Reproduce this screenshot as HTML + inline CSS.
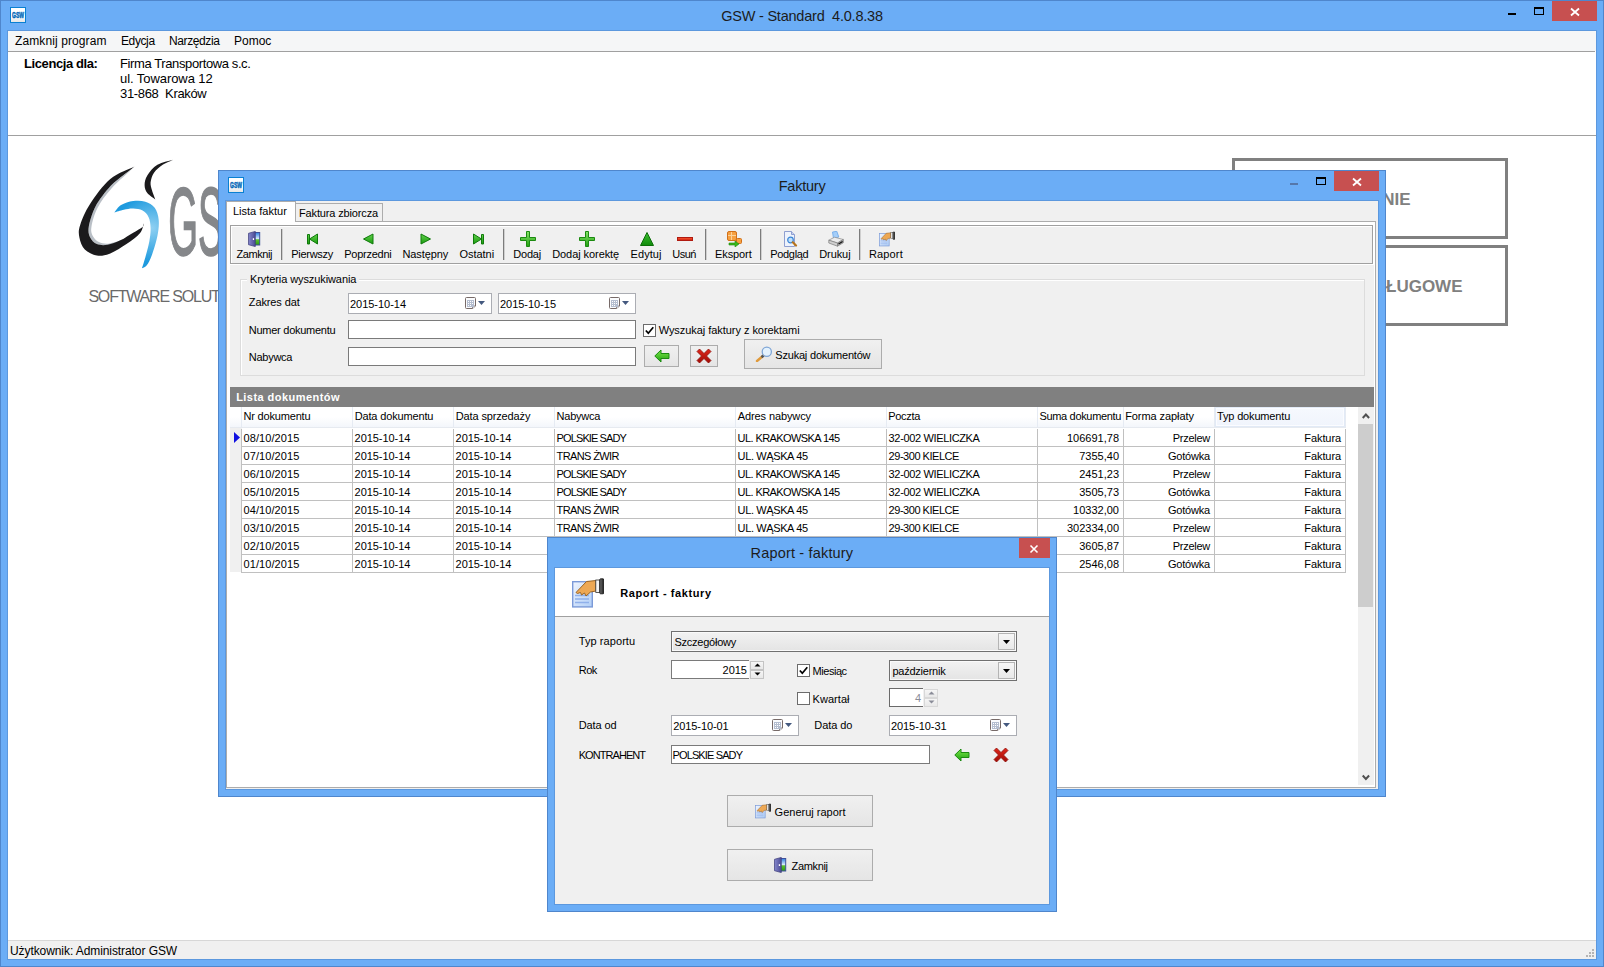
<!DOCTYPE html><html lang="pl"><head><meta charset="utf-8"><title>GSW - Standard 4.0.8.38</title><style>
*{box-sizing:border-box;margin:0;padding:0}
html,body{width:1604px;height:967px;overflow:hidden}
body{position:relative;background:#6BADF6;font-family:"Liberation Sans",sans-serif;font-size:11px;color:#000}
.a{position:absolute}
.t{position:absolute;white-space:pre;line-height:14px;height:14px}
.win{position:absolute;background:#6BADF6;box-shadow:inset 0 0 0 1px #4F86CC}
.title{position:absolute;font-size:15px;line-height:20px;height:20px;white-space:pre;color:#000}
.close{position:absolute;background:#C75050}
.inp{position:absolute;background:#fff;border:1px solid #7a7a7a}
.dt{position:absolute;background:#fff;border:1px solid #abadb3}
.btn{position:absolute;border:1px solid #acacac;background:linear-gradient(#f0f0f0,#e5e5e5)}
.tbi{position:absolute;top:5px;width:16px;height:16px}
.sep{position:absolute;top:3px;width:1px;height:31px;background:#7c7c7c;box-shadow:1px 0 0 #cfcfcf}
.cell{position:absolute;height:18px;border-right:1px solid #c0c0c0;border-bottom:1px solid #c0c0c0;background:#fff}
.hd{position:absolute;top:0;height:20px;background:linear-gradient(#fff,#fff 50%,#f3f6fb);border-right:1px solid #e6ebf3}
.cb{position:absolute;width:13px;height:13px;background:#fff;border:1px solid #6c6c6c}
</style></head><body>
<div class="win" style="left:0;top:0;width:1604px;height:967px">
<svg class="a" style="left:10px;top:7px" width="16" height="16" viewBox="0 0 16 16"><defs><linearGradient id="gi1" x1="0" y1="0" x2="0" y2="1"><stop offset="0.5" stop-color="#fff"/><stop offset="1" stop-color="#e4e4e4"/></linearGradient></defs><rect x="0.5" y="0.5" width="15" height="15" fill="url(#gi1)" stroke="#0a80d2"/><text x="2" y="11.300" font-family="Liberation Sans, sans-serif" font-size="8.600" font-weight="bold" fill="#0468b8" stroke="#0468b8" stroke-width="0.500" textLength="12" lengthAdjust="spacingAndGlyphs">GSW</text></svg>
<span class="t" style="left:721.2px;top:6px;font-size:14.5px;line-height:20px;height:20px;color:#1c1c1c;letter-spacing:-0.22px">GSW - Standard  4.0.8.38</span>
<div class="a" style="left:1508px;top:13px;width:8px;height:2px;background:#000"></div>
<div class="a" style="left:1534px;top:7px;width:10px;height:8px;border:1px solid #000;border-top-width:2px"></div>
<div class="close" style="left:1552px;top:1px;width:45px;height:20px"></div><svg class="a" style="left:1569px;top:5.5px" width="12" height="12" viewBox="-6 -6 12 12"><path d="M-4 -3.5L4 3.5M4 -3.5L-4 3.5" stroke="#fff" stroke-width="1.8" fill="none"/></svg>
<div class="a" style="left:8px;top:31px;width:1588px;height:928px;background:#fff;box-shadow:0 0 0 1px #5C98DE">
<div class="a" style="left:0;top:0;width:1588px;height:20px;background:#F5F6F7;font-size:12px">
<span class="t" style="left:7px;top:3px;letter-spacing:0.10px">Zamknij program</span>
<span class="t" style="left:113px;top:3px;letter-spacing:-0.39px">Edycja</span>
<span class="t" style="left:161px;top:3px;letter-spacing:-0.40px">Narzędzia</span>
<span class="t" style="left:226px;top:3px">Pomoc</span>
</div>
<div class="a" style="left:0;top:20px;width:1587px;height:1px;background:#a0a0a0"></div>
<span class="t" style="left:16px;top:25px;font-size:13px;font-weight:bold;line-height:15px;letter-spacing:-0.40px">Licencja dla:</span>
<span class="t" style="left:112px;top:25px;font-size:13px;line-height:15px;letter-spacing:-0.39px">Firma Transportowa s.c.</span>
<span class="t" style="left:112px;top:40px;font-size:13px;line-height:15px;letter-spacing:-0.07px">ul. Towarowa 12</span>
<span class="t" style="left:112px;top:55px;font-size:13px;line-height:15px;letter-spacing:-0.33px">31-868  Kraków</span>
<div class="a" style="left:0;top:104px;width:1588px;height:1px;background:#a0a0a0"></div>
<svg class="a" style="left:62px;top:119px" width="160" height="130" viewBox="70 150 160 130">
<defs><radialGradient id="lb2" cx="152" cy="228" r="34" gradientUnits="userSpaceOnUse"><stop offset="0" stop-color="#8fd0f2"/><stop offset="1" stop-color="#1e9ade"/></radialGradient></defs>
<path d="M133.2 168.1C129.4 171.2 116.6 179.9 110.3 186.3C104.1 192.7 99.1 199.7 95.5 206.5C92.0 213.2 89.7 221.5 88.8 226.6C87.9 231.8 88.8 234.5 90.2 237.4C91.5 240.3 94.0 242.7 96.9 244.1C99.8 245.5 103.6 246.1 107.6 245.7C111.7 245.3 116.6 243.6 121.1 241.7C125.6 239.7 132.3 235.3 134.5 234.0C132.3 235.0 125.4 238.4 121.1 240.1C116.7 241.7 112.0 243.3 108.3 243.7C104.6 244.0 101.5 243.3 98.9 242.1C96.3 240.8 94.1 238.6 92.8 236.0C91.6 233.4 90.7 231.3 91.5 226.6C92.3 221.9 94.2 214.2 97.6 207.8C100.9 201.4 105.7 194.9 111.7 188.3C117.6 181.7 129.6 171.5 133.2 168.1Z" fill="#b9bfc6"/>
<path d="M134.5 166.4C130.5 168.5 117.7 172.7 110.3 178.9C102.9 185.1 95.2 196.0 90.2 203.8C85.1 211.5 81.9 219.7 80.1 225.3C78.3 230.9 78.6 233.3 79.4 237.4C80.2 241.4 81.9 246.4 84.8 249.5C87.7 252.5 92.6 254.8 96.9 255.5C101.1 256.2 105.4 255.4 110.3 253.5C115.3 251.6 121.5 247.4 126.5 244.1C131.4 240.7 137.0 236.8 139.9 233.3C142.8 229.9 143.3 224.9 143.9 223.3C143.7 223.9 144.4 225.3 142.6 226.9C140.8 228.4 136.9 230.4 133.2 232.7C129.5 234.9 124.7 238.3 120.4 240.3C116.1 242.3 111.6 244.1 107.6 244.8C103.7 245.4 99.8 245.3 96.9 244.1C94.0 242.9 91.5 240.3 90.2 237.4C88.8 234.5 87.9 231.8 88.8 226.6C89.7 221.5 92.0 213.2 95.5 206.5C99.1 199.7 105.2 191.9 110.3 186.3C115.5 180.7 122.4 176.2 126.5 172.8C130.5 169.5 133.2 167.5 134.5 166.4Z" fill="#1b1a1c"/>
<path d="M173.5 159.7C170.8 160.5 161.7 162.1 157.4 164.8C153.0 167.4 149.4 172.2 147.3 175.5C145.2 178.9 144.6 182.0 144.6 184.9C144.6 187.9 145.5 190.6 147.3 193.0C149.1 195.4 154.0 198.4 155.3 199.5C154.8 197.9 152.8 193.2 152.0 190.3C151.2 187.5 150.3 185.2 150.6 182.3C151.0 179.3 152.0 175.8 154.0 172.8C156.0 169.9 159.5 167.0 162.7 164.8C166.0 162.6 171.7 160.5 173.5 159.7Z" fill="#1b1a1c"/>
<path d="M114.4 212.5C115.5 211.3 117.9 207.0 121.1 205.1C124.2 203.2 129.1 201.6 133.2 201.1C137.2 200.5 141.7 200.6 145.3 201.7C148.9 202.9 152.4 204.8 154.7 207.8C156.9 210.8 158.3 215.2 158.7 219.9C159.2 224.6 158.5 230.2 157.4 236.0C156.2 241.8 153.8 249.9 152.0 254.8C150.2 259.8 148.3 263.4 146.6 265.6C144.9 267.8 142.7 267.8 141.9 268.3C142.5 266.5 144.0 262.0 145.3 257.5C146.5 253.0 148.4 246.3 149.3 241.4C150.2 236.5 150.8 232.0 150.6 228.0C150.5 223.9 150.0 220.1 148.6 217.2C147.3 214.3 145.2 211.9 142.6 210.5C140.0 209.0 136.3 208.6 133.2 208.5C130.0 208.4 126.9 209.1 123.8 209.8C120.6 210.5 115.9 212.1 114.4 212.5Z" fill="url(#lb2)"/>
<text x="0" y="0" font-family="Liberation Sans, sans-serif" font-size="97" fill="#85878a" stroke="#85878a" stroke-width="1.2" style="vector-effect:non-scaling-stroke" transform="translate(168.3 255) scale(0.395 1)">GSW</text>
</svg>
<span class="t" style="left:80.4px;top:257px;font-size:16px;line-height:18px;height:18px;color:#6a6a6a;letter-spacing:-1.19px">SOFTWARE SOLUTIONS</span>
<div class="a" style="left:1224px;top:127px;width:276px;height:81px;border:3px solid #808080;background:#fff"><span class="t" style="right:94.4px;top:29px;font-size:17px;font-weight:bold;color:#808080;line-height:20px;height:20px">FAKTUROWANIE</span></div>
<div class="a" style="left:1224px;top:214px;width:276px;height:81px;border:3px solid #808080;background:#fff"><span class="t" style="right:42.5px;top:29px;font-size:17px;font-weight:bold;color:#808080;line-height:20px;height:20px">FAKTURY USŁUGOWE</span></div>
<div class="a" style="left:0;top:909px;width:1588px;height:19px;background:#F0F0F0;border-top:1px solid #d7d7d7;font-size:12px"><span class="t" style="left:2px;top:3px;letter-spacing:-0.08px">Użytkownik: Administrator GSW</span>
<svg class="a" style="right:2px;bottom:1px" width="9" height="9" viewBox="0 0 9 9"><g fill="#b4b4b4"><rect x="7" y="0" width="2" height="2"/><rect x="4" y="3" width="2" height="2"/><rect x="7" y="3" width="2" height="2"/><rect x="1" y="6" width="2" height="2"/><rect x="4" y="6" width="2" height="2"/><rect x="7" y="6" width="2" height="2"/></g></svg>
</div>
</div>
</div>
<div class="win" style="left:218px;top:170px;width:1168px;height:627px">
<svg class="a" style="left:10px;top:7px" width="16" height="16" viewBox="0 0 16 16"><defs><linearGradient id="gi3" x1="0" y1="0" x2="0" y2="1"><stop offset="0.5" stop-color="#fff"/><stop offset="1" stop-color="#e4e4e4"/></linearGradient></defs><rect x="0.5" y="0.5" width="15" height="15" fill="url(#gi3)" stroke="#0a80d2"/><text x="2" y="11.300" font-family="Liberation Sans, sans-serif" font-size="8.600" font-weight="bold" fill="#0468b8" stroke="#0468b8" stroke-width="0.500" textLength="12" lengthAdjust="spacingAndGlyphs">GSW</text></svg>
<span class="t" style="left:560.7px;top:6px;font-size:14.5px;line-height:20px;height:20px;color:#1c1c1c;letter-spacing:-0.22px">Faktury</span>
<div class="a" style="left:1072px;top:13px;width:8px;height:2px;background:#5577aa"></div>
<div class="a" style="left:1098px;top:7px;width:10px;height:8px;border:1px solid #000;border-top-width:2px"></div>
<div class="close" style="left:1116px;top:1px;width:45px;height:20px"></div><svg class="a" style="left:1133px;top:5.5px" width="12" height="12" viewBox="-6 -6 12 12"><path d="M-4 -3.5L4 3.5M4 -3.5L-4 3.5" stroke="#fff" stroke-width="1.8" fill="none"/></svg>
<div class="a" style="left:8px;top:31px;width:1152px;height:588px;background:#F0F0F0;box-shadow:0 0 0 1px #5C98DE">
<div class="a" style="left:0;top:20px;width:1150px;height:567px;background:#fff;border:1px solid #acacac"></div>
<div class="a" style="left:0;top:0;width:70px;height:21px;background:#fff;border:1px solid #acacac;border-bottom:none"><span class="t" style="left:6px;top:2px">Lista faktur</span></div>
<div class="a" style="left:69px;top:2px;width:88px;height:19px;background:#f0f0f0;border:1px solid #acacac"><span class="t" style="left:3px;top:2px;letter-spacing:-0.14px">Faktura zbiorcza</span></div>
<div class="a" style="left:4px;top:24px;width:1143px;height:39px;background:#F0F0F0;border:1px solid #a0a0a0;box-shadow:inset 1px 1px 0 #fff">
<div class="a" style="left:0;top:0;right:0;bottom:0">
<span class="tbi" style="left:16px"><svg width="16" height="16" viewBox="0 0 16 16"><defs><linearGradient id="sky4" x1="0" y1="0" x2="0" y2="1"><stop offset="0" stop-color="#2a7ce0"/><stop offset=".5" stop-color="#d8ecfc"/><stop offset=".58" stop-color="#5cc030"/><stop offset="1" stop-color="#2a9a14"/></linearGradient><linearGradient id="dr4" x1="0" y1="0" x2="1" y2="0"><stop offset="0" stop-color="#8587cc"/><stop offset="1" stop-color="#4b4b94"/></linearGradient></defs><rect x="7.500" y="1.500" width="5.200" height="12.500" fill="url(#sky4)" stroke="#3f4f9a" stroke-width="1"/><path d="M1.500 2.300L8.300 0.400V15.600L1.500 13.700Z" fill="url(#dr4)" stroke="#3a3a78" stroke-width=".7"/><rect x="5.800" y="7.200" width="1.300" height="1.800" fill="#fff"/></svg></span>
<span class="t" style="left:5.5px;top:21px;letter-spacing:-0.43px">Zamknij</span>
<span class="tbi" style="left:74px"><svg width="16" height="16" viewBox="0 0 16 16"><defs><linearGradient id="gg5" x1="0" y1="0" x2="0" y2="1"><stop offset="0" stop-color="#62d24c"/><stop offset="1" stop-color="#1a9a0e"/></linearGradient></defs><path d="M12.500 3V13L4.500 8Z" fill="url(#gg5)" stroke="#0f7a0a" stroke-width="1" stroke-linejoin="round"/><rect x="2.500" y="3.500" width="2" height="9.500" fill="url(#gg5)" stroke="#0f7a0a" stroke-width="1" stroke-linejoin="round"/></svg></span>
<span class="t" style="left:60.3px;top:21px;letter-spacing:-0.29px">Pierwszy</span>
<span class="tbi" style="left:129px"><svg width="16" height="16" viewBox="0 0 16 16"><defs><linearGradient id="gg6" x1="0" y1="0" x2="0" y2="1"><stop offset="0" stop-color="#62d24c"/><stop offset="1" stop-color="#1a9a0e"/></linearGradient></defs><path d="M13 3V13L3.500 8Z" fill="url(#gg6)" stroke="#0f7a0a" stroke-width="1" stroke-linejoin="round"/></svg></span>
<span class="t" style="left:113.2px;top:21px;letter-spacing:-0.25px">Poprzedni</span>
<span class="tbi" style="left:186px"><svg width="16" height="16" viewBox="0 0 16 16"><defs><linearGradient id="gg7" x1="0" y1="0" x2="0" y2="1"><stop offset="0" stop-color="#62d24c"/><stop offset="1" stop-color="#1a9a0e"/></linearGradient></defs><path d="M4 3V13L13.500 8Z" fill="url(#gg7)" stroke="#0f7a0a" stroke-width="1" stroke-linejoin="round"/></svg></span>
<span class="t" style="left:171.5px;top:21px;letter-spacing:-0.11px">Następny</span>
<span class="tbi" style="left:238px"><svg width="16" height="16" viewBox="0 0 16 16"><defs><linearGradient id="gg8" x1="0" y1="0" x2="0" y2="1"><stop offset="0" stop-color="#62d24c"/><stop offset="1" stop-color="#1a9a0e"/></linearGradient></defs><path d="M4.500 3V13L12.500 8Z" fill="url(#gg8)" stroke="#0f7a0a" stroke-width="1" stroke-linejoin="round"/><rect x="12.500" y="3.500" width="2" height="9.500" fill="url(#gg8)" stroke="#0f7a0a" stroke-width="1" stroke-linejoin="round"/></svg></span>
<span class="t" style="left:228.5px;top:21px;letter-spacing:-0.04px">Ostatni</span>
<span class="tbi" style="left:289px"><svg width="16" height="16" viewBox="0 0 16 16"><defs><linearGradient id="gp9" x1="0" y1="0" x2="0" y2="1"><stop offset="0" stop-color="#86e468"/><stop offset="1" stop-color="#22a012"/></linearGradient></defs><path d="M6.500 0.500H9.500V6.500H15.500V9.500H9.500V15.500H6.500V9.500H0.500V6.500H6.500Z" fill="url(#gp9)" stroke="#1b8a10" stroke-width="1" stroke-linejoin="round"/></svg></span>
<span class="t" style="left:282.3px;top:21px;letter-spacing:-0.23px">Dodaj</span>
<span class="tbi" style="left:348px"><svg width="16" height="16" viewBox="0 0 16 16"><defs><linearGradient id="gp10" x1="0" y1="0" x2="0" y2="1"><stop offset="0" stop-color="#86e468"/><stop offset="1" stop-color="#22a012"/></linearGradient></defs><path d="M6.500 0.500H9.500V6.500H15.500V9.500H9.500V15.500H6.500V9.500H0.500V6.500H6.500Z" fill="url(#gp10)" stroke="#1b8a10" stroke-width="1" stroke-linejoin="round"/></svg></span>
<span class="t" style="left:321.2px;top:21px;letter-spacing:-0.07px">Dodaj korektę</span>
<span class="tbi" style="left:408px"><svg width="16" height="16" viewBox="0 0 16 16"><defs><linearGradient id="gt11" x1="0" y1="0" x2="0" y2="1"><stop offset="0" stop-color="#3cc030"/><stop offset="1" stop-color="#0f8a0a"/></linearGradient></defs><path d="M8 1.500L14.500 14.500H1.500Z" fill="url(#gt11)" stroke="#0c6e08" stroke-width="1" stroke-linejoin="round"/></svg></span>
<span class="t" style="left:399.6px;top:21px;letter-spacing:0.05px">Edytuj</span>
<span class="tbi" style="left:446px"><svg width="16" height="16" viewBox="0 0 16 16"><defs><linearGradient id="gm12" x1="0" y1="0" x2="0" y2="1"><stop offset="0" stop-color="#ff5a30"/><stop offset="1" stop-color="#c81e10"/></linearGradient></defs><rect x="0.500" y="6.500" width="15" height="3" fill="url(#gm12)" stroke="#b01a10" stroke-width="1"/></svg></span>
<span class="t" style="left:441.3px;top:21px;letter-spacing:-0.52px">Usuń</span>
<span class="tbi" style="left:495px"><svg width="16" height="16" viewBox="0 0 16 16"><rect x="1.500" y="0.500" width="9" height="9" rx="1.500" fill="#f7a040" stroke="#d0701a"/><path d="M5.500 1V9M2 4.500H10" stroke="#fbd29a" stroke-width="1"/><rect x="10.500" y="7.500" width="5" height="5" rx="1" fill="#f7a040" stroke="#d0701a"/><path d="M3 12H9V10L13 13L9 16V14H3Z" fill="#38b81c" stroke="#1c8a0c" stroke-width=".6"/></svg></span>
<span class="t" style="left:484px;top:21px;letter-spacing:-0.09px">Eksport</span>
<span class="tbi" style="left:551px"><svg width="16" height="16" viewBox="0 0 16 16"><path d="M2.500 0.500H9.500L12.500 3.500V15.500H2.500Z" fill="#eef3fc" stroke="#8f9fd0"/><path d="M9.500 0.500V3.500H12.500" fill="#c9d3ee" stroke="#8f9fd0"/><circle cx="8.500" cy="9" r="2.800" fill="#bfe0fa" stroke="#3b86d6" stroke-width="1.200"/><path d="M10.800 11.300L14 14.500" stroke="#b8741a" stroke-width="2.200" stroke-linecap="round"/></svg></span>
<span class="t" style="left:539.3px;top:21px;letter-spacing:-0.34px">Podgląd</span>
<span class="tbi" style="left:597px"><svg width="16" height="16" viewBox="0 0 16 16"><path d="M4.500 1L8.800 0.300L10.800 6L5.500 7.500Z" fill="#a4cef9" stroke="#6aa6e8" stroke-width=".8"/><path d="M0.800 9.200L6.500 6.200L15.300 8.500L9.500 12Z" fill="#ececec" stroke="#8a8a8a" stroke-width=".7"/><path d="M0.800 9.200L9.500 12V15.200L0.800 12Z" fill="#cfcfcf" stroke="#7a7a7a" stroke-width=".7"/><path d="M9.500 12L15.300 8.500V11.700L9.500 15.200Z" fill="#b4b4b4" stroke="#7a7a7a" stroke-width=".7"/><path d="M10.500 13L14.600 10.500" stroke="#111" stroke-width="1.300"/></svg></span>
<span class="t" style="left:588.2px;top:21px;letter-spacing:-0.08px">Drukuj</span>
<span class="tbi" style="left:648px"><svg width="16" height="16" viewBox="0 -1 32 32"><defs><linearGradient id="rd13" x1="0" y1="0" x2="1" y2="1"><stop offset="0" stop-color="#f0f5fe"/><stop offset="1" stop-color="#b0cef6"/></linearGradient><linearGradient id="rc13" x1="0" y1="0" x2="1" y2="0"><stop offset="0" stop-color="#777"/><stop offset="1" stop-color="#1a1a1a"/></linearGradient></defs><rect x="0.700" y="3.700" width="19.600" height="25.200" fill="url(#rd13)" stroke="#7b9ad8" stroke-width="1.400"/><path d="M3 17.500H17M3 21H17M3 24.500H17" stroke="#8fb0ea" stroke-width="1.400"/><path d="M4 14.500L14.500 3.500L24 2.500V13L18.500 14L14 18L12.500 15L9.500 17L8.500 14.500L5.500 15.500Z" fill="#eda854" stroke="#9a6424" stroke-width="1" stroke-linejoin="round"/><rect x="23.800" y="2" width="4" height="12.500" fill="#f4f4f4" stroke="#333" stroke-width=".8"/><rect x="27.800" y="0.800" width="4" height="15" rx=".8" fill="url(#rc13)" stroke="#111" stroke-width=".8"/></svg></span>
<span class="t" style="left:638px;top:21px;letter-spacing:0.14px">Raport</span>
<div class="sep" style="left:50px"></div>
<div class="sep" style="left:272px"></div>
<div class="sep" style="left:474px"></div>
<div class="sep" style="left:529px"></div>
<div class="sep" style="left:628px"></div>
</div></div>
<div class="a" style="left:4px;top:64px;width:1144px;height:122px;background:#F0F0F0">
<div class="a" style="left:10px;top:14px;width:1125px;height:97px;border:1px solid #dcdcdc;box-shadow:inset 1px 1px 0 #fff"></div>
<div class="a" style="left:17px;top:10px;width:112px;height:8px;background:#F0F0F0"></div>
<span class="t" style="left:20px;top:7px;letter-spacing:-0.09px">Kryteria wyszukiwania</span>
<span class="t" style="left:18.8px;top:30px;letter-spacing:-0.11px">Zakres dat</span>
<span class="t" style="left:18.8px;top:58px;letter-spacing:-0.26px">Numer dokumentu</span>
<span class="t" style="left:18.8px;top:85px;letter-spacing:-0.26px">Nabywca</span>
<div class="dt" style="left:118px;top:28px;width:144px;height:21px"><span class="t" style="left:1px;top:3px;letter-spacing:-0.03px">2015-10-14</span><span class="a" style="right:4px;top:3px"><svg width="22" height="14" viewBox="0 0 22 14"><path d="M1.500 0.500H9.500Q10.500 0.500 10.500 1.500V9L7.500 11.500H1.500Q0.500 11.500 0.500 10.500V1.500Q0.500 0.500 1.500 0.500Z" fill="#fafbfd" stroke="#776a68"/><path d="M7.500 11.500V9H10.500" fill="#e8ecf4" stroke="#776a68" stroke-width=".8"/><rect x="2" y="3" width="7" height="7" fill="#b4bdcf"/><g fill="#fff"><rect x="3" y="4" width="1" height="1"/><rect x="5" y="4" width="1" height="1"/><rect x="7" y="4" width="1" height="1"/><rect x="3" y="6" width="1" height="1"/><rect x="5" y="6" width="1" height="1"/><rect x="7" y="6" width="1" height="1"/><rect x="3" y="8" width="1" height="1"/><rect x="5" y="8" width="1" height="1"/></g><path d="M13 4H20L16.500 8Z" fill="#44597f"/></svg></span></div>
<div class="dt" style="left:268px;top:28px;width:138px;height:21px"><span class="t" style="left:1px;top:3px;letter-spacing:-0.03px">2015-10-15</span><span class="a" style="right:4px;top:3px"><svg width="22" height="14" viewBox="0 0 22 14"><path d="M1.500 0.500H9.500Q10.500 0.500 10.500 1.500V9L7.500 11.500H1.500Q0.500 11.500 0.500 10.500V1.500Q0.500 0.500 1.500 0.500Z" fill="#fafbfd" stroke="#776a68"/><path d="M7.500 11.500V9H10.500" fill="#e8ecf4" stroke="#776a68" stroke-width=".8"/><rect x="2" y="3" width="7" height="7" fill="#b4bdcf"/><g fill="#fff"><rect x="3" y="4" width="1" height="1"/><rect x="5" y="4" width="1" height="1"/><rect x="7" y="4" width="1" height="1"/><rect x="3" y="6" width="1" height="1"/><rect x="5" y="6" width="1" height="1"/><rect x="7" y="6" width="1" height="1"/><rect x="3" y="8" width="1" height="1"/><rect x="5" y="8" width="1" height="1"/></g><path d="M13 4H20L16.500 8Z" fill="#44597f"/></svg></span></div>
<div class="inp" style="left:118px;top:55px;width:288px;height:19px"></div>
<div class="inp" style="left:118px;top:82px;width:288px;height:19px"></div>
<div class="cb" style="left:413px;top:59px"><svg class="a" style="left:1px;top:1px" width="9" height="9" viewBox="0 0 9 9"><path d="M0.800 4.500L3.300 7.200L8.300 1.200" stroke="#000" stroke-width="1.700" fill="none"/></svg></div>
<span class="t" style="left:428.7px;top:58px;letter-spacing:-0.05px">Wyszukaj faktury z korektami</span>
<div class="btn" style="left:414px;top:80px;width:35px;height:22px"><span class="a" style="left:9px;top:2px"><svg width="16" height="16" viewBox="0 0 16 16"><defs><linearGradient id="gl14" x1="0" y1="0" x2="0" y2="1"><stop offset="0" stop-color="#7be84a"/><stop offset="1" stop-color="#1fa010"/></linearGradient></defs><path d="M0.800 8L7 2V5.500H15V10.500H7V14Z" fill="url(#gl14)" stroke="#1b8a10" stroke-width="1" stroke-linejoin="round"/></svg></span></div>
<div class="btn" style="left:460px;top:80px;width:28px;height:22px"><span class="a" style="left:5px;top:2px"><svg width="16" height="16" viewBox="0 0 16 16"><defs><linearGradient id="gx15" x1="0" y1="0" x2="0" y2="1"><stop offset="0" stop-color="#e0261a"/><stop offset="1" stop-color="#a00c06"/></linearGradient></defs><path d="M1 3.500L3.500 1L8 5.500L12.500 1L15 3.500L10.500 8L15 12.500L12.500 15L8 10.500L3.500 15L1 12.500L5.500 8Z" fill="url(#gx15)" stroke="#8e0e08" stroke-width=".8" stroke-linejoin="round"/></svg></span></div>
<div class="btn" style="left:514px;top:74px;width:138px;height:30px"><span class="a" style="left:10px;top:6px"><svg width="18" height="16" viewBox="0 0 18 16"><path d="M8.500 9.500L2 15" stroke="#e09a3a" stroke-width="2.400" stroke-linecap="round"/><path d="M8.500 9.500L6.500 11.200" stroke="#555" stroke-width="2.600"/><circle cx="11.800" cy="5.700" r="4.600" fill="#e4f2fd" stroke="#7fa6d6" stroke-width="1.300"/></svg></span><span class="t" style="left:30.3px;top:8px;letter-spacing:-0.20px">Szukaj dokumentów</span></div>
</div>
<div class="a" style="left:4px;top:186px;width:1144px;height:20px;background:#808080;color:#fff;font-weight:bold"><span class="t" style="left:6.2px;top:3px;letter-spacing:0.45px">Lista dokumentów</span></div>
<div class="a" style="left:4px;top:206px;width:1144px;height:379px;background:#fff">
<div class="a" style="left:0;top:0;width:1116px;height:21px;background:#fff;border-bottom:1px solid #e6eaf0">
<div class="hd" style="left:0;width:12px"></div>
<div class="hd" style="left:12px;width:111px"><span class="t" style="left:1.4px;top:2px;letter-spacing:-0.17px">Nr dokumentu</span></div>
<div class="hd" style="left:123px;width:101px"><span class="t" style="left:1.7px;top:2px;letter-spacing:-0.15px">Data dokumentu</span></div>
<div class="hd" style="left:224px;width:101px"><span class="t" style="left:1.8px;top:2px;letter-spacing:-0.14px">Data sprzedaży</span></div>
<div class="hd" style="left:325px;width:181px"><span class="t" style="left:1.6px;top:2px;letter-spacing:-0.26px">Nabywca</span></div>
<div class="hd" style="left:506px;width:151px"><span class="t" style="left:1.8px;top:2px;letter-spacing:-0.11px">Adres nabywcy</span></div>
<div class="hd" style="left:657px;width:151px"><span class="t" style="left:1.2px;top:2px;letter-spacing:-0.29px">Poczta</span></div>
<div class="hd" style="left:808px;width:86px"><span class="t" style="left:1.4px;top:2px;letter-spacing:-0.32px">Suma dokumentu</span></div>
<div class="hd" style="left:894px;width:91px"><span class="t" style="left:1.2px;top:2px;letter-spacing:-0.08px">Forma zapłaty</span></div>
<div class="hd" style="left:985px;width:131px;background:linear-gradient(#f6f9fe,#f0f4fc);box-shadow:inset 0 0 0 1px #e2eaf6,inset 0 0 0 2px #fbfcff"><span class="t" style="left:2px;top:2px;letter-spacing:-0.16px">Typ dokumentu</span></div>
</div>
<div class="a" style="left:0;top:21px;width:12px;height:144px;background:#f0f0f0"></div>
<div class="a" style="left:11px;top:22px;width:1px;height:144px;background:#c0c0c0"></div>
<svg class="a" style="left:4px;top:25px" width="6" height="11" viewBox="0 0 6 11"><path d="M0 0L6 5.500L0 11Z" fill="#1010e0"/></svg>
<div class="cell" style="left:12px;top:22px;width:111px"><span class="t" style="left:1.6px;top:2px;letter-spacing:0.07px">08/10/2015</span></div>
<div class="cell" style="left:123px;top:22px;width:101px"><span class="t" style="left:1.6px;top:2px;letter-spacing:-0.05px">2015-10-14</span></div>
<div class="cell" style="left:224px;top:22px;width:101px"><span class="t" style="left:1.6px;top:2px;letter-spacing:-0.05px">2015-10-14</span></div>
<div class="cell" style="left:325px;top:22px;width:181px"><span class="t" style="left:1.6px;top:2px;letter-spacing:-0.89px">POLSKIE SADY</span></div>
<div class="cell" style="left:506px;top:22px;width:151px"><span class="t" style="left:1.6px;top:2px;letter-spacing:-0.58px">UL. KRAKOWSKA 145</span></div>
<div class="cell" style="left:657px;top:22px;width:151px"><span class="t" style="left:1.6px;top:2px;letter-spacing:-0.35px">32-002 WIELICZKA</span></div>
<div class="cell" style="left:808px;top:22px;width:86px"><span class="t" style="right:4px;top:2px">106691,78</span></div>
<div class="cell" style="left:894px;top:22px;width:91px"><span class="t" style="right:4px;top:2px;letter-spacing:-0.27px">Przelew</span></div>
<div class="cell" style="left:985px;top:22px;width:131px"><span class="t" style="right:4px;top:2px;letter-spacing:-0.09px">Faktura</span></div>
<div class="cell" style="left:12px;top:40px;width:111px"><span class="t" style="left:1.6px;top:2px;letter-spacing:0.07px">07/10/2015</span></div>
<div class="cell" style="left:123px;top:40px;width:101px"><span class="t" style="left:1.6px;top:2px;letter-spacing:-0.05px">2015-10-14</span></div>
<div class="cell" style="left:224px;top:40px;width:101px"><span class="t" style="left:1.6px;top:2px;letter-spacing:-0.05px">2015-10-14</span></div>
<div class="cell" style="left:325px;top:40px;width:181px"><span class="t" style="left:1.6px;top:2px;letter-spacing:-0.63px">TRANS ŻWIR</span></div>
<div class="cell" style="left:506px;top:40px;width:151px"><span class="t" style="left:1.6px;top:2px;letter-spacing:-0.38px">UL. WĄSKA 45</span></div>
<div class="cell" style="left:657px;top:40px;width:151px"><span class="t" style="left:1.6px;top:2px;letter-spacing:-0.47px">29-300 KIELCE</span></div>
<div class="cell" style="left:808px;top:40px;width:86px"><span class="t" style="right:4px;top:2px">7355,40</span></div>
<div class="cell" style="left:894px;top:40px;width:91px"><span class="t" style="right:4px;top:2px;letter-spacing:-0.20px">Gotówka</span></div>
<div class="cell" style="left:985px;top:40px;width:131px"><span class="t" style="right:4px;top:2px;letter-spacing:-0.09px">Faktura</span></div>
<div class="cell" style="left:12px;top:58px;width:111px"><span class="t" style="left:1.6px;top:2px;letter-spacing:0.07px">06/10/2015</span></div>
<div class="cell" style="left:123px;top:58px;width:101px"><span class="t" style="left:1.6px;top:2px;letter-spacing:-0.05px">2015-10-14</span></div>
<div class="cell" style="left:224px;top:58px;width:101px"><span class="t" style="left:1.6px;top:2px;letter-spacing:-0.05px">2015-10-14</span></div>
<div class="cell" style="left:325px;top:58px;width:181px"><span class="t" style="left:1.6px;top:2px;letter-spacing:-0.89px">POLSKIE SADY</span></div>
<div class="cell" style="left:506px;top:58px;width:151px"><span class="t" style="left:1.6px;top:2px;letter-spacing:-0.58px">UL. KRAKOWSKA 145</span></div>
<div class="cell" style="left:657px;top:58px;width:151px"><span class="t" style="left:1.6px;top:2px;letter-spacing:-0.35px">32-002 WIELICZKA</span></div>
<div class="cell" style="left:808px;top:58px;width:86px"><span class="t" style="right:4px;top:2px">2451,23</span></div>
<div class="cell" style="left:894px;top:58px;width:91px"><span class="t" style="right:4px;top:2px;letter-spacing:-0.27px">Przelew</span></div>
<div class="cell" style="left:985px;top:58px;width:131px"><span class="t" style="right:4px;top:2px;letter-spacing:-0.09px">Faktura</span></div>
<div class="cell" style="left:12px;top:76px;width:111px"><span class="t" style="left:1.6px;top:2px;letter-spacing:0.07px">05/10/2015</span></div>
<div class="cell" style="left:123px;top:76px;width:101px"><span class="t" style="left:1.6px;top:2px;letter-spacing:-0.05px">2015-10-14</span></div>
<div class="cell" style="left:224px;top:76px;width:101px"><span class="t" style="left:1.6px;top:2px;letter-spacing:-0.05px">2015-10-14</span></div>
<div class="cell" style="left:325px;top:76px;width:181px"><span class="t" style="left:1.6px;top:2px;letter-spacing:-0.89px">POLSKIE SADY</span></div>
<div class="cell" style="left:506px;top:76px;width:151px"><span class="t" style="left:1.6px;top:2px;letter-spacing:-0.58px">UL. KRAKOWSKA 145</span></div>
<div class="cell" style="left:657px;top:76px;width:151px"><span class="t" style="left:1.6px;top:2px;letter-spacing:-0.35px">32-002 WIELICZKA</span></div>
<div class="cell" style="left:808px;top:76px;width:86px"><span class="t" style="right:4px;top:2px">3505,73</span></div>
<div class="cell" style="left:894px;top:76px;width:91px"><span class="t" style="right:4px;top:2px;letter-spacing:-0.20px">Gotówka</span></div>
<div class="cell" style="left:985px;top:76px;width:131px"><span class="t" style="right:4px;top:2px;letter-spacing:-0.09px">Faktura</span></div>
<div class="cell" style="left:12px;top:94px;width:111px"><span class="t" style="left:1.6px;top:2px;letter-spacing:0.07px">04/10/2015</span></div>
<div class="cell" style="left:123px;top:94px;width:101px"><span class="t" style="left:1.6px;top:2px;letter-spacing:-0.05px">2015-10-14</span></div>
<div class="cell" style="left:224px;top:94px;width:101px"><span class="t" style="left:1.6px;top:2px;letter-spacing:-0.05px">2015-10-14</span></div>
<div class="cell" style="left:325px;top:94px;width:181px"><span class="t" style="left:1.6px;top:2px;letter-spacing:-0.63px">TRANS ŻWIR</span></div>
<div class="cell" style="left:506px;top:94px;width:151px"><span class="t" style="left:1.6px;top:2px;letter-spacing:-0.38px">UL. WĄSKA 45</span></div>
<div class="cell" style="left:657px;top:94px;width:151px"><span class="t" style="left:1.6px;top:2px;letter-spacing:-0.47px">29-300 KIELCE</span></div>
<div class="cell" style="left:808px;top:94px;width:86px"><span class="t" style="right:4px;top:2px">10332,00</span></div>
<div class="cell" style="left:894px;top:94px;width:91px"><span class="t" style="right:4px;top:2px;letter-spacing:-0.20px">Gotówka</span></div>
<div class="cell" style="left:985px;top:94px;width:131px"><span class="t" style="right:4px;top:2px;letter-spacing:-0.09px">Faktura</span></div>
<div class="cell" style="left:12px;top:112px;width:111px"><span class="t" style="left:1.6px;top:2px;letter-spacing:0.07px">03/10/2015</span></div>
<div class="cell" style="left:123px;top:112px;width:101px"><span class="t" style="left:1.6px;top:2px;letter-spacing:-0.05px">2015-10-14</span></div>
<div class="cell" style="left:224px;top:112px;width:101px"><span class="t" style="left:1.6px;top:2px;letter-spacing:-0.05px">2015-10-14</span></div>
<div class="cell" style="left:325px;top:112px;width:181px"><span class="t" style="left:1.6px;top:2px;letter-spacing:-0.63px">TRANS ŻWIR</span></div>
<div class="cell" style="left:506px;top:112px;width:151px"><span class="t" style="left:1.6px;top:2px;letter-spacing:-0.38px">UL. WĄSKA 45</span></div>
<div class="cell" style="left:657px;top:112px;width:151px"><span class="t" style="left:1.6px;top:2px;letter-spacing:-0.47px">29-300 KIELCE</span></div>
<div class="cell" style="left:808px;top:112px;width:86px"><span class="t" style="right:4px;top:2px">302334,00</span></div>
<div class="cell" style="left:894px;top:112px;width:91px"><span class="t" style="right:4px;top:2px;letter-spacing:-0.27px">Przelew</span></div>
<div class="cell" style="left:985px;top:112px;width:131px"><span class="t" style="right:4px;top:2px;letter-spacing:-0.09px">Faktura</span></div>
<div class="cell" style="left:12px;top:130px;width:111px"><span class="t" style="left:1.6px;top:2px;letter-spacing:0.07px">02/10/2015</span></div>
<div class="cell" style="left:123px;top:130px;width:101px"><span class="t" style="left:1.6px;top:2px;letter-spacing:-0.05px">2015-10-14</span></div>
<div class="cell" style="left:224px;top:130px;width:101px"><span class="t" style="left:1.6px;top:2px;letter-spacing:-0.05px">2015-10-14</span></div>
<div class="cell" style="left:325px;top:130px;width:181px"><span class="t" style="left:1.6px;top:2px;letter-spacing:-0.89px">POLSKIE SADY</span></div>
<div class="cell" style="left:506px;top:130px;width:151px"><span class="t" style="left:1.6px;top:2px;letter-spacing:-0.58px">UL. KRAKOWSKA 145</span></div>
<div class="cell" style="left:657px;top:130px;width:151px"><span class="t" style="left:1.6px;top:2px;letter-spacing:-0.35px">32-002 WIELICZKA</span></div>
<div class="cell" style="left:808px;top:130px;width:86px"><span class="t" style="right:4px;top:2px">3605,87</span></div>
<div class="cell" style="left:894px;top:130px;width:91px"><span class="t" style="right:4px;top:2px;letter-spacing:-0.27px">Przelew</span></div>
<div class="cell" style="left:985px;top:130px;width:131px"><span class="t" style="right:4px;top:2px;letter-spacing:-0.09px">Faktura</span></div>
<div class="cell" style="left:12px;top:148px;width:111px"><span class="t" style="left:1.6px;top:2px;letter-spacing:0.07px">01/10/2015</span></div>
<div class="cell" style="left:123px;top:148px;width:101px"><span class="t" style="left:1.6px;top:2px;letter-spacing:-0.05px">2015-10-14</span></div>
<div class="cell" style="left:224px;top:148px;width:101px"><span class="t" style="left:1.6px;top:2px;letter-spacing:-0.05px">2015-10-14</span></div>
<div class="cell" style="left:325px;top:148px;width:181px"><span class="t" style="left:1.6px;top:2px;letter-spacing:-0.63px">TRANS ŻWIR</span></div>
<div class="cell" style="left:506px;top:148px;width:151px"><span class="t" style="left:1.6px;top:2px;letter-spacing:-0.38px">UL. WĄSKA 45</span></div>
<div class="cell" style="left:657px;top:148px;width:151px"><span class="t" style="left:1.6px;top:2px;letter-spacing:-0.47px">29-300 KIELCE</span></div>
<div class="cell" style="left:808px;top:148px;width:86px"><span class="t" style="right:4px;top:2px">2546,08</span></div>
<div class="cell" style="left:894px;top:148px;width:91px"><span class="t" style="right:4px;top:2px;letter-spacing:-0.20px">Gotówka</span></div>
<div class="cell" style="left:985px;top:148px;width:131px"><span class="t" style="right:4px;top:2px;letter-spacing:-0.09px">Faktura</span></div>
<div class="a" style="left:1128px;top:0;width:16px;height:378px;background:#f0f0f0">
<div class="a" style="left:0;top:17px;width:15px;height:183px;background:#cdcdcd"></div>
<svg class="a" style="left:4px;top:6px" width="8" height="7" viewBox="0 0 8 7"><path d="M0.700 5L3.900 1.500L7.100 5" stroke="#505050" stroke-width="2" fill="none"/></svg>
<svg class="a" style="left:4px;bottom:4px" width="8" height="7" viewBox="0 0 8 7"><path d="M0.700 1.500L3.900 5L7.100 1.500" stroke="#505050" stroke-width="2" fill="none"/></svg>
</div>
</div>
</div>
</div>
<div class="win" style="left:547px;top:537px;width:510px;height:375px">
<span class="t" style="left:203.5px;top:6px;font-size:14.5px;line-height:20px;height:20px;color:#1c1c1c;letter-spacing:0.18px">Raport - faktury</span>
<div class="close" style="left:472px;top:1px;width:31px;height:20px"></div><svg class="a" style="left:481px;top:5.5px" width="12" height="12" viewBox="-6 -6 12 12"><path d="M-3.5 -3.5L3.5 3.5M3.5 -3.5L-3.5 3.5" stroke="#fff" stroke-width="1.6" fill="none"/></svg>
<div class="a" style="left:8px;top:31px;width:494px;height:336px;background:#F0F0F0;box-shadow:0 0 0 1px #5C98DE">
<div class="a" style="left:0;top:0;width:494px;height:49px;background:#fff;border-bottom:1px solid #a0a0a0"></div>
<span class="a" style="left:17px;top:9px"><svg width="32" height="32" viewBox="0 -1 32 32"><defs><linearGradient id="rd16" x1="0" y1="0" x2="1" y2="1"><stop offset="0" stop-color="#f0f5fe"/><stop offset="1" stop-color="#b0cef6"/></linearGradient><linearGradient id="rc16" x1="0" y1="0" x2="1" y2="0"><stop offset="0" stop-color="#777"/><stop offset="1" stop-color="#1a1a1a"/></linearGradient></defs><rect x="0.700" y="3.700" width="19.600" height="25.200" fill="url(#rd16)" stroke="#7b9ad8" stroke-width="1.400"/><path d="M3 17.500H17M3 21H17M3 24.500H17" stroke="#8fb0ea" stroke-width="1.400"/><path d="M4 14.500L14.500 3.500L24 2.500V13L18.500 14L14 18L12.500 15L9.500 17L8.500 14.500L5.500 15.500Z" fill="#eda854" stroke="#9a6424" stroke-width="1" stroke-linejoin="round"/><rect x="23.800" y="2" width="4" height="12.500" fill="#f4f4f4" stroke="#333" stroke-width=".8"/><rect x="27.800" y="0.800" width="4" height="15" rx=".8" fill="url(#rc16)" stroke="#111" stroke-width=".8"/></svg></span>
<span class="t" style="left:65.29999999999995px;top:18px;font-weight:bold;letter-spacing:0.59px">Raport - faktury</span>
<span class="t" style="left:23.7px;top:66px;letter-spacing:0.08px">Typ raportu</span>
<span class="t" style="left:23.7px;top:95px;letter-spacing:-0.45px">Rok</span>
<span class="t" style="left:23.7px;top:150px;letter-spacing:-0.08px">Data od</span>
<span class="t" style="left:259.3px;top:150px;letter-spacing:-0.08px">Data do</span>
<span class="t" style="left:23.7px;top:180px;letter-spacing:-0.94px">KONTRAHENT</span>
<div class="a" style="left:116px;top:63px;width:346px;height:21px;border:1px solid #707070;background:linear-gradient(#f2f2f2,#e4e4e4);box-shadow:inset 0 0 0 1px #fafafa"><span class="t" style="left:2.5px;top:3px;letter-spacing:-0.25px">Szczegółowy</span><div class="a" style="right:1px;top:1px;bottom:1px;width:17px;background:linear-gradient(#f6f6f6,#e9e9e9);border:1px solid #b4b4b4"><svg class="a" style="left:4px;top:6px" width="7" height="4" viewBox="0 0 7 4"><path d="M0 0H7L3.500 4Z" fill="#000"/></svg></div></div>
<div class="a" style="left:334px;top:92px;width:128px;height:21px;border:1px solid #707070;background:linear-gradient(#f2f2f2,#e4e4e4);box-shadow:inset 0 0 0 1px #fafafa"><span class="t" style="left:2.5px;top:3px;letter-spacing:-0.25px">październik</span><div class="a" style="right:1px;top:1px;bottom:1px;width:17px;background:linear-gradient(#f6f6f6,#e9e9e9);border:1px solid #b4b4b4"><svg class="a" style="left:4px;top:6px" width="7" height="4" viewBox="0 0 7 4"><path d="M0 0H7L3.500 4Z" fill="#000"/></svg></div></div>
<div class="a" style="left:116px;top:92px;width:78px;height:19px;border:1px solid #7a7a7a;border-right:none;background:#fff"><span class="t" style="right:2px;top:2px;color:#000">2015</span></div>
<div class="a" style="left:195px;top:93px;width:14px;height:9px;background:linear-gradient(#f6f6f6,#e8e8e8);border:1px solid #c4c4c4"><svg class="a" style="left:2.5px;top:0px" width="7" height="6" viewBox="0 0 7 6"><path d="M0.500 4.500H6.500L3.500 1.500Z" fill="#000"/></svg></div>
<div class="a" style="left:195px;top:102px;width:14px;height:9px;background:linear-gradient(#f6f6f6,#e8e8e8);border:1px solid #c4c4c4"><svg class="a" style="left:2.5px;top:0px" width="7" height="6" viewBox="0 0 7 6"><path d="M0.500 1.500H6.500L3.500 4.500Z" fill="#000"/></svg></div>
<div class="a" style="left:334px;top:120px;width:34px;height:19px;border:1px solid #6a6a6a;border-right:none;background:#fff"><span class="t" style="right:2px;top:2px;color:#8a8c98">4</span></div>
<div class="a" style="left:369px;top:121px;width:14px;height:9px;background:linear-gradient(#f6f6f6,#e8e8e8);border:1px solid #d8d8d8"><svg class="a" style="left:2.5px;top:0px" width="7" height="6" viewBox="0 0 7 6"><path d="M0.500 4.500H6.500L3.500 1.500Z" fill="#8a8c98"/></svg></div>
<div class="a" style="left:369px;top:130px;width:14px;height:9px;background:linear-gradient(#f6f6f6,#e8e8e8);border:1px solid #d8d8d8"><svg class="a" style="left:2.5px;top:0px" width="7" height="6" viewBox="0 0 7 6"><path d="M0.500 1.500H6.500L3.500 4.500Z" fill="#8a8c98"/></svg></div>
<div class="cb" style="left:242px;top:96px"><svg class="a" style="left:1px;top:1px" width="9" height="9" viewBox="0 0 9 9"><path d="M0.800 4.500L3.300 7.200L8.300 1.200" stroke="#000" stroke-width="1.700" fill="none"/></svg></div>
<span class="t" style="left:257.6px;top:96px;letter-spacing:-0.47px">Miesiąc</span>
<div class="cb" style="left:242px;top:124px"></div>
<span class="t" style="left:257.6px;top:124px;letter-spacing:0.04px">Kwartał</span>
<div class="dt" style="left:116px;top:147px;width:128px;height:21px"><span class="t" style="left:1.2px;top:3px;letter-spacing:-0.08px">2015-10-01</span><span class="a" style="right:4px;top:3px"><svg width="22" height="14" viewBox="0 0 22 14"><path d="M1.500 0.500H9.500Q10.500 0.500 10.500 1.500V9L7.500 11.500H1.500Q0.500 11.500 0.500 10.500V1.500Q0.500 0.500 1.500 0.500Z" fill="#fafbfd" stroke="#776a68"/><path d="M7.500 11.500V9H10.500" fill="#e8ecf4" stroke="#776a68" stroke-width=".8"/><rect x="2" y="3" width="7" height="7" fill="#b4bdcf"/><g fill="#fff"><rect x="3" y="4" width="1" height="1"/><rect x="5" y="4" width="1" height="1"/><rect x="7" y="4" width="1" height="1"/><rect x="3" y="6" width="1" height="1"/><rect x="5" y="6" width="1" height="1"/><rect x="7" y="6" width="1" height="1"/><rect x="3" y="8" width="1" height="1"/><rect x="5" y="8" width="1" height="1"/></g><path d="M13 4H20L16.500 8Z" fill="#44597f"/></svg></span></div>
<div class="dt" style="left:334px;top:147px;width:128px;height:21px"><span class="t" style="left:1px;top:3px;letter-spacing:-0.08px">2015-10-31</span><span class="a" style="right:4px;top:3px"><svg width="22" height="14" viewBox="0 0 22 14"><path d="M1.500 0.500H9.500Q10.500 0.500 10.500 1.500V9L7.500 11.500H1.500Q0.500 11.500 0.500 10.500V1.500Q0.500 0.500 1.500 0.500Z" fill="#fafbfd" stroke="#776a68"/><path d="M7.500 11.500V9H10.500" fill="#e8ecf4" stroke="#776a68" stroke-width=".8"/><rect x="2" y="3" width="7" height="7" fill="#b4bdcf"/><g fill="#fff"><rect x="3" y="4" width="1" height="1"/><rect x="5" y="4" width="1" height="1"/><rect x="7" y="4" width="1" height="1"/><rect x="3" y="6" width="1" height="1"/><rect x="5" y="6" width="1" height="1"/><rect x="7" y="6" width="1" height="1"/><rect x="3" y="8" width="1" height="1"/><rect x="5" y="8" width="1" height="1"/></g><path d="M13 4H20L16.500 8Z" fill="#44597f"/></svg></span></div>
<div class="inp" style="left:116px;top:177px;width:259px;height:19px"><span class="t" style="left:0.5px;top:2px;letter-spacing:-0.87px">POLSKIE SADY</span></div>
<span class="a" style="left:399px;top:179px"><svg width="16" height="16" viewBox="0 0 16 16"><defs><linearGradient id="gl17" x1="0" y1="0" x2="0" y2="1"><stop offset="0" stop-color="#7be84a"/><stop offset="1" stop-color="#1fa010"/></linearGradient></defs><path d="M0.800 8L7 2V5.500H15V10.500H7V14Z" fill="url(#gl17)" stroke="#1b8a10" stroke-width="1" stroke-linejoin="round"/></svg></span>
<span class="a" style="left:438px;top:179px"><svg width="16" height="16" viewBox="0 0 16 16"><defs><linearGradient id="gx18" x1="0" y1="0" x2="0" y2="1"><stop offset="0" stop-color="#e0261a"/><stop offset="1" stop-color="#a00c06"/></linearGradient></defs><path d="M1 3.500L3.500 1L8 5.500L12.500 1L15 3.500L10.500 8L15 12.500L12.500 15L8 10.500L3.500 15L1 12.500L5.500 8Z" fill="url(#gx18)" stroke="#8e0e08" stroke-width=".8" stroke-linejoin="round"/></svg></span>
<div class="btn" style="left:172px;top:227px;width:146px;height:32px"><span class="a" style="left:27px;top:7px"><svg width="16" height="16" viewBox="0 -1 32 32"><defs><linearGradient id="rd19" x1="0" y1="0" x2="1" y2="1"><stop offset="0" stop-color="#f0f5fe"/><stop offset="1" stop-color="#b0cef6"/></linearGradient><linearGradient id="rc19" x1="0" y1="0" x2="1" y2="0"><stop offset="0" stop-color="#777"/><stop offset="1" stop-color="#1a1a1a"/></linearGradient></defs><rect x="0.700" y="3.700" width="19.600" height="25.200" fill="url(#rd19)" stroke="#7b9ad8" stroke-width="1.400"/><path d="M3 17.500H17M3 21H17M3 24.500H17" stroke="#8fb0ea" stroke-width="1.400"/><path d="M4 14.500L14.500 3.500L24 2.500V13L18.500 14L14 18L12.500 15L9.500 17L8.500 14.500L5.500 15.500Z" fill="#eda854" stroke="#9a6424" stroke-width="1" stroke-linejoin="round"/><rect x="23.800" y="2" width="4" height="12.500" fill="#f4f4f4" stroke="#333" stroke-width=".8"/><rect x="27.800" y="0.800" width="4" height="15" rx=".8" fill="url(#rc19)" stroke="#111" stroke-width=".8"/></svg></span><span class="t" style="left:46.6px;top:9px">Generuj raport</span></div>
<div class="btn" style="left:172px;top:281px;width:146px;height:32px"><span class="a" style="left:45px;top:7px"><svg width="16" height="16" viewBox="0 0 16 16"><defs><linearGradient id="sky20" x1="0" y1="0" x2="0" y2="1"><stop offset="0" stop-color="#2a7ce0"/><stop offset=".5" stop-color="#d8ecfc"/><stop offset=".58" stop-color="#5cc030"/><stop offset="1" stop-color="#2a9a14"/></linearGradient><linearGradient id="dr20" x1="0" y1="0" x2="1" y2="0"><stop offset="0" stop-color="#8587cc"/><stop offset="1" stop-color="#4b4b94"/></linearGradient></defs><rect x="7.500" y="1.500" width="5.200" height="12.500" fill="url(#sky20)" stroke="#3f4f9a" stroke-width="1"/><path d="M1.500 2.300L8.300 0.400V15.600L1.500 13.700Z" fill="url(#dr20)" stroke="#3a3a78" stroke-width=".7"/><rect x="5.800" y="7.200" width="1.300" height="1.800" fill="#fff"/></svg></span><span class="t" style="left:63.6px;top:9px;letter-spacing:-0.36px">Zamknij</span></div>
</div>
</div>
</body></html>
